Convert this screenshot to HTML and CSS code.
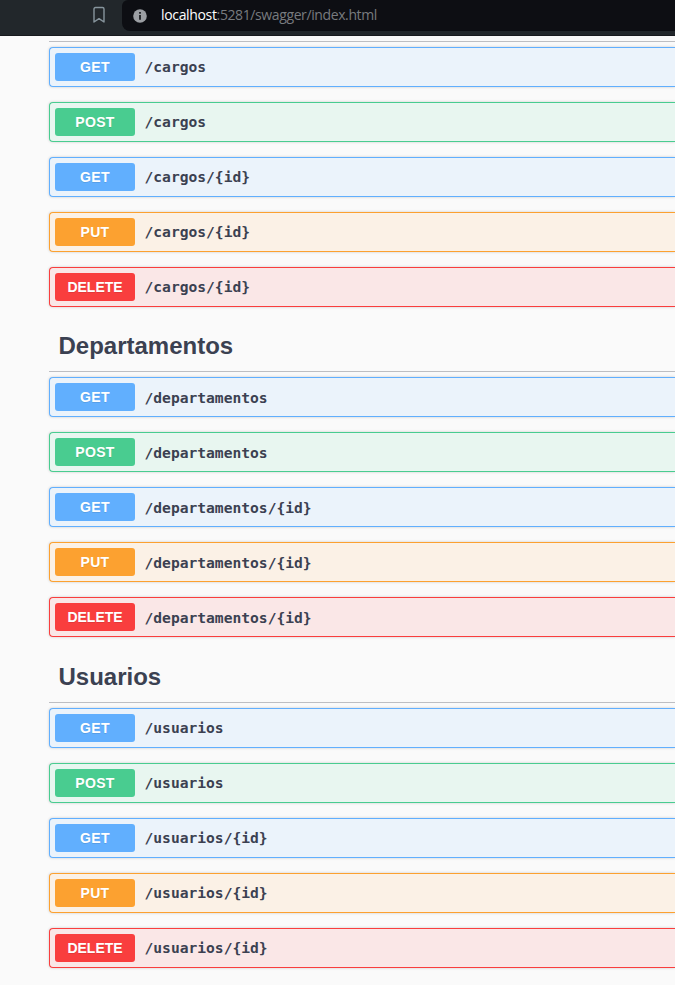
FILE: index.html
```html
<!DOCTYPE html>
<html lang="es">
<head>
<meta charset="utf-8">
<title>Swagger UI</title>
<link rel="stylesheet" href="styles.css">
</head>
<body>
<header class="toolbar">
  <svg class="bookmark" width="14" height="18" viewBox="0 0 14 18"><path d="M2 3Q2 1.5 3.5 1.5H10.5Q12 1.5 12 3V16L7 12.6L2 16Z" fill="none" stroke="#87959d" stroke-width="1.4" stroke-linejoin="round"/></svg>
  <div class="address">
    <svg class="info" width="14" height="14" viewBox="0 0 14 14"><circle cx="7" cy="7" r="6.8" fill="#9b9ea3"/><path d="M6.1 3.1h1.8v1.7H6.1zM6.1 6h1.8v4.8H6.1z" fill="#1c1e23"/></svg>
    <span class="url"><span class="host">localhost</span><span class="path">:5281/swagger/index.html</span></span>
  </div>
</header>
<main class="api">
  <section class="tag first">
    <div class="op get"><span class="method">GET</span><span class="route">/cargos</span></div>
    <div class="op post"><span class="method">POST</span><span class="route">/cargos</span></div>
    <div class="op get"><span class="method">GET</span><span class="route">/cargos/{id}</span></div>
    <div class="op put"><span class="method">PUT</span><span class="route">/cargos/{id}</span></div>
    <div class="op delete"><span class="method">DELETE</span><span class="route">/cargos/{id}</span></div>
  </section>
  <section class="tag departments">
    <h3>Departamentos</h3>
    <div class="op get"><span class="method">GET</span><span class="route">/departamentos</span></div>
    <div class="op post"><span class="method">POST</span><span class="route">/departamentos</span></div>
    <div class="op get"><span class="method">GET</span><span class="route">/departamentos/{id}</span></div>
    <div class="op put"><span class="method">PUT</span><span class="route">/departamentos/{id}</span></div>
    <div class="op delete"><span class="method">DELETE</span><span class="route">/departamentos/{id}</span></div>
  </section>
  <section class="tag users">
    <h3>Usuarios</h3>
    <div class="op get"><span class="method">GET</span><span class="route">/usuarios</span></div>
    <div class="op post"><span class="method">POST</span><span class="route">/usuarios</span></div>
    <div class="op get"><span class="method">GET</span><span class="route">/usuarios/{id}</span></div>
    <div class="op put"><span class="method">PUT</span><span class="route">/usuarios/{id}</span></div>
    <div class="op delete"><span class="method">DELETE</span><span class="route">/usuarios/{id}</span></div>
  </section>
</main>
</body>
</html>
```
FILE: styles.css
```css
* { box-sizing: border-box; }

body {
  margin: 0;
  height: 985px;
  overflow: hidden;
  background: #fafafa;
  color: #3b4151;
  font-family: "Liberation Sans", Arial, sans-serif;
}

.toolbar {
  display: flex;
  align-items: flex-start;
  height: 36px;
  padding-left: 92px;
  background: #22272b;
  border-bottom: 1px solid #181a1e;
}

.bookmark { margin-top: 6px; }

.address {
  flex: 1;
  display: flex;
  align-items: center;
  height: 31px;
  margin-left: 16px;
  padding-left: 11px;
  background: #0d0e13;
  border-radius: 6px 0 0 8px;
}

.url {
  margin-left: 14px;
  padding-bottom: 1px;
  font: 14px/20px "Open Sans", "Noto Sans", sans-serif;
  white-space: nowrap;
}

.host { color: #fff; letter-spacing: -0.34px; }
.path { color: #787b7f; letter-spacing: -0.39px; }

.api { padding-left: 49px; }

.tag {
  display: flex;
  flex-direction: column;
  gap: 15px;
}

.first {
  margin-top: 5px;
  padding-top: 5px;
  border-top: 1px solid #bdbec2;
}

h3 {
  height: 65px;
  margin: 0 0 -10px;
  padding-left: 9.5px;
  border-bottom: 1px solid #bdbec2;
  font-size: 24px;
  line-height: 78px;
}

.users h3 {
  height: 66px;
  line-height: 80px;
}

.op {
  display: flex;
  align-items: center;
  height: 40px;
  padding-left: 5px;
  border: 1px solid;
  border-right: 0;
  border-radius: 4px 0 0 4px;
  box-shadow: 0 0 3px rgba(0, 0, 0, .19);
}

.method {
  width: 80px;
  height: 28px;
  border-radius: 3px;
  color: #fff;
  font-size: 14px;
  font-weight: 700;
  line-height: 28px;
  text-align: center;
  text-shadow: 0 1px 0 rgba(0, 0, 0, .1);
}

.route {
  margin-left: 9.5px;
  font: 700 14.62px/20px "DejaVu Sans Mono", monospace;
}

.departments .route { padding-top: 2px; }

.get { border-color: #61affe; background: #ebf3fb; }
.get .method { background: #61affe; letter-spacing: .4px; }
.post { border-color: #49cc90; background: #e8f6f0; }
.post .method { background: #49cc90; letter-spacing: .3px; }
.put { border-color: #fca130; background: #fbf1e6; }
.put .method { background: #fca130; letter-spacing: .3px; }
.delete { border-color: #f93e3e; background: #fae7e7; }
.delete .method { background: #f93e3e; }
```
